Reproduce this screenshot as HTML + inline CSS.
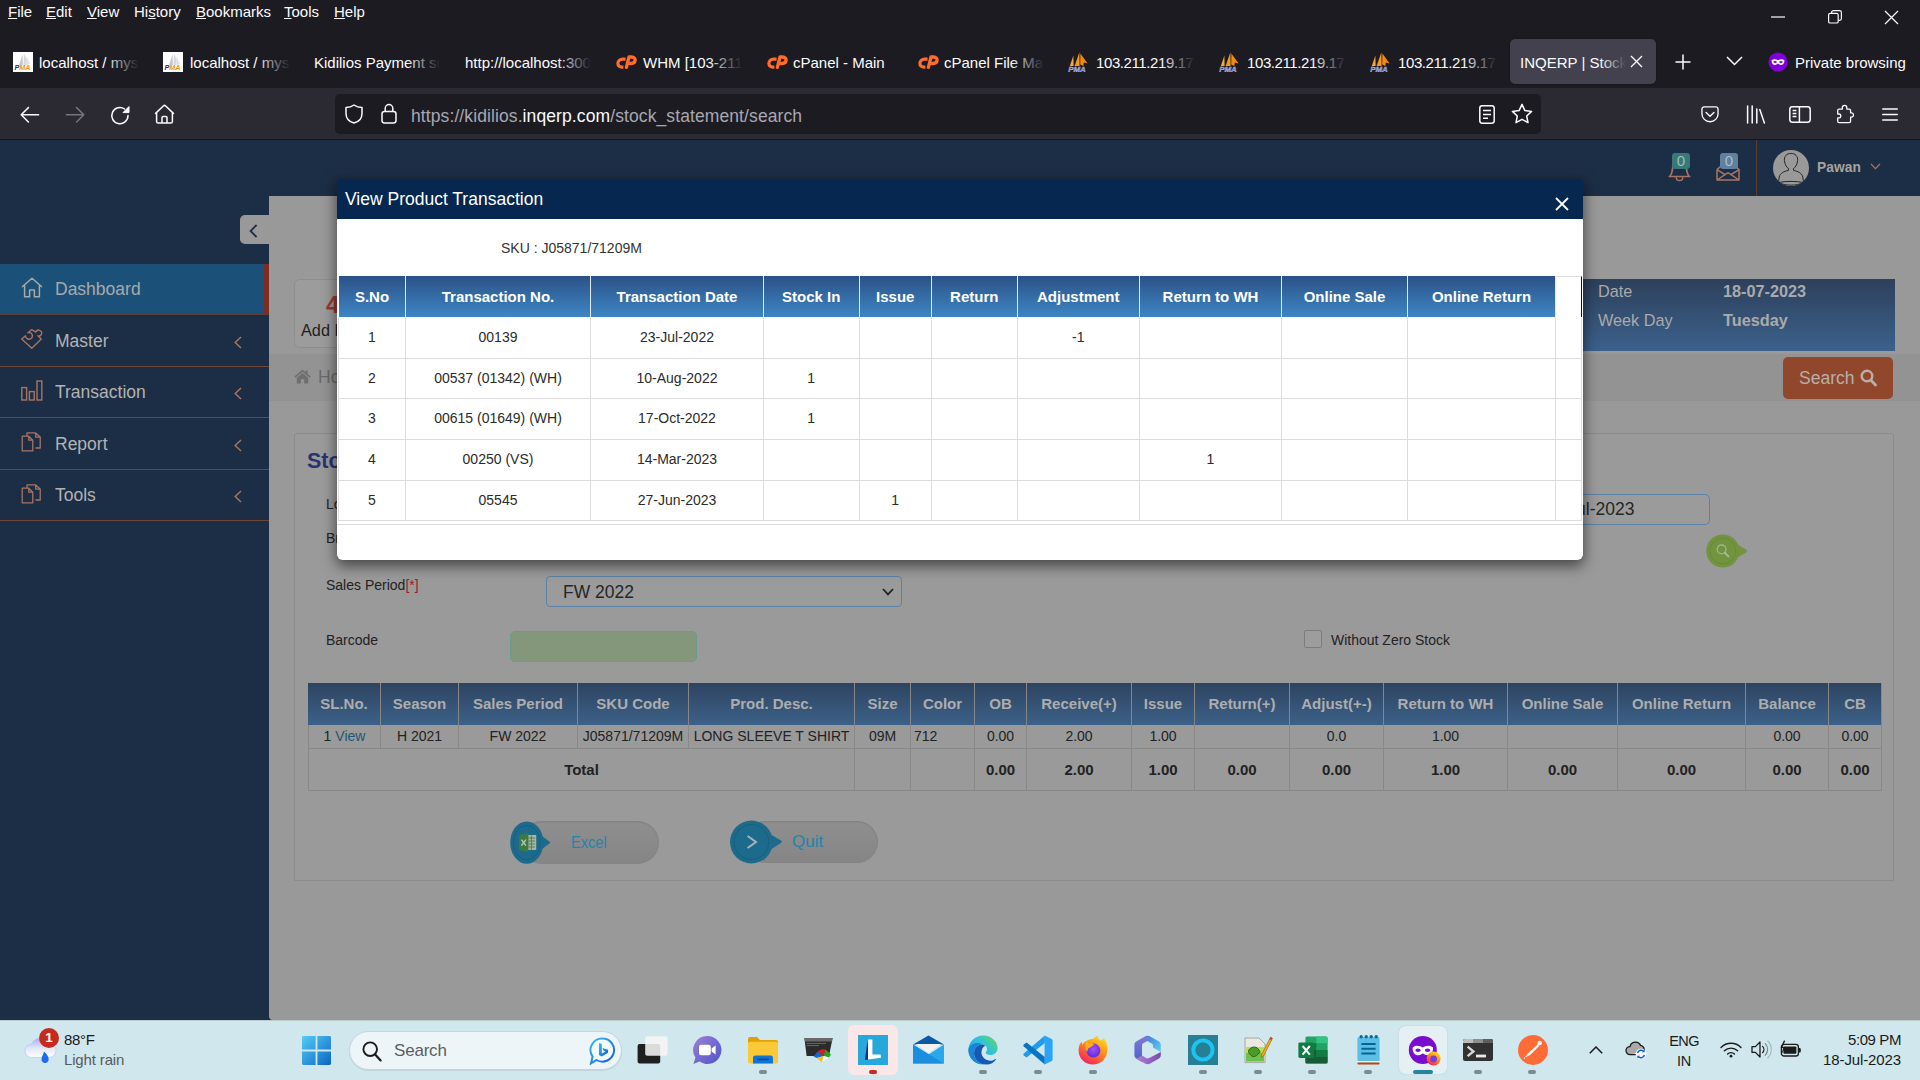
<!DOCTYPE html>
<html lang="en">
<head>
<meta charset="utf-8">
<title>INQERP | Stock statement</title>
<style>
*{box-sizing:border-box;margin:0;padding:0}
html,body{width:1920px;height:1080px;overflow:hidden;background:#1c1b22;font-family:"Liberation Sans",sans-serif}
.abs{position:absolute}
#root{position:relative;width:1920px;height:1080px;overflow:hidden}
/* ---------- browser chrome ---------- */
#chrome{position:absolute;left:0;top:0;width:1920px;height:140px;background:#1c1b22;color:#fbfbfe}
#menubar span{position:absolute;top:2px;font-size:15px;line-height:20px;color:#fbfbfe;white-space:nowrap}
#menubar u{text-decoration:underline;text-underline-offset:1px}
.tab{position:absolute;top:53px;height:20px;font-size:15px;line-height:20px;color:#fbfbfe;white-space:nowrap;overflow:hidden}
.tab .fade{position:absolute;right:0;top:0;width:34px;height:20px;background:linear-gradient(90deg,rgba(28,27,34,0),#1c1b22)}
#navbar{position:absolute;left:0;top:88px;width:1920px;height:52px;background:#2b2a33;border-bottom:1px solid #15141a}
#urlbar{position:absolute;left:335px;top:6px;width:1206px;height:40px;border-radius:5px;background:#1c1b22}
#urltext{position:absolute;left:76px;top:11px;font-size:17.5px;line-height:22px;color:#a8a8b0;white-space:nowrap;letter-spacing:.1px}
#urltext b{font-weight:normal;color:#fbfbfe}
svg{display:block}
.ico{position:absolute}
/* ---------- page ---------- */
#page{position:absolute;left:0;top:140px;width:1920px;height:880px;background:#1c2e45;overflow:hidden}

/* page pieces (coordinates relative to #page top=140) */
#content{position:absolute;left:269px;top:56px;width:1651px;height:824px;background:#999;border-bottom-left-radius:4px}
.side-row{position:absolute;left:0;width:269px;height:51px;border-bottom:1px solid #6e4636}
.side-row .txt{position:absolute;left:55px;top:14px;font-size:17.5px;line-height:22px;color:#b3b3b3;white-space:nowrap}
.side-row svg{position:absolute}
#toggle{position:absolute;left:240px;top:75px;width:29px;height:29px;background:#999;border-radius:5px 0 0 5px}
.lbl{position:absolute;font-size:14px;line-height:18px;color:#222;white-space:nowrap}

#crumb{position:absolute;left:269px;top:214px;width:1651px;height:47px;background:#939393}
#datep{position:absolute;left:1380px;top:139px;width:515px;height:72px;background:linear-gradient(#2d405b,#3c618c)}
#datep div{position:absolute;font-size:16.25px;line-height:20px;color:#aaa;white-space:nowrap}
#searchbtn{position:absolute;left:1783px;top:217px;width:110px;height:42px;border-radius:5px;background:#91472c;color:#b9aea8;font-size:17.5px;line-height:42px;padding-left:16px}
#panel{position:absolute;left:294px;top:293px;width:1600px;height:448px;border:1px solid #8b8b8b;border-radius:3px 3px 0 0;background:#9a9a9a}
#gt{position:absolute;left:308px;top:543px;border-collapse:separate;border-spacing:0;table-layout:fixed;width:1574px;font-size:14px;color:#222}
#gt th{height:42px;background:linear-gradient(#2e4460,#3c6189);color:#adadad;font-size:15px;font-weight:bold;text-align:center;border-right:1px solid #868686;padding:0 0 2px 0}
#gt td{text-align:center;border-right:1px solid #888;border-bottom:1px solid #888;padding:0;white-space:nowrap;overflow:hidden}
#gt td:first-child{border-left:1px solid #888}
#gt tr.r1 td{height:23.5px;line-height:22px}
#gt tr.r2 td{height:42.5px;font-weight:bold;font-size:15px}
#gt a{color:#1f5677;text-decoration:none}
.pill{position:absolute;height:43px;border-radius:22px;background:linear-gradient(#8f8f8f,#858585);box-shadow:inset 0 1px 2px rgba(0,0,0,.12)}
.pilltxt{position:absolute;font-size:17px;line-height:22px;color:#2585a9;white-space:nowrap}

/* ---------- modal ---------- */
#modal{position:absolute;left:337px;top:179px;width:1246px;height:381px;background:linear-gradient(#06274f 0,#06274f 40px,#fff 40px);border-radius:2px 2px 6px 6px;box-shadow:0 5px 14px 1px rgba(0,0,0,.55)}
#mhead{position:absolute;left:0;top:0;width:1246px;height:40px}
#mtitle{position:absolute;left:8px;top:9px;font-size:17.5px;line-height:22px;color:#fff;white-space:nowrap}
#mt{position:absolute;left:1px;top:97px;border-collapse:separate;border-spacing:0;table-layout:fixed;width:1244px;font-size:14px;color:#2b2b2b}
#mt th{height:41px;background:linear-gradient(#2a5287,#3f86c4);color:#fff;font-size:15px;font-weight:bold;text-align:center;border-right:1px solid #e4e9f0;padding:0;white-space:nowrap}
#mt th.last{background:#fff;border-top:1px solid #ddd;border-right:1.5px solid #111}
#mt td{text-align:center;border-right:1px solid #ddd;border-bottom:1px solid #ddd;padding:0 0 1.5px 0;white-space:nowrap}
#mt td:first-child{border-left:1px solid #ddd}
#mt th:first-child{border-left:1px solid #fff}

/* ---------- taskbar ---------- */
#taskbar .t{position:absolute;white-space:nowrap;color:#1b1b1b;font-size:15px;line-height:18px}
#taskbar .ind{position:absolute;top:50px;width:8px;height:4px;border-radius:2px;background:#7d8a90}

#taskbar{position:absolute;left:0;top:1020px;width:1920px;height:60px;background:#cfe7ed;box-shadow:inset 0 1px 0 #b9cbd1}
</style>
</head>
<body>
<div id="root">

<!-- ======================= BROWSER CHROME ======================= -->
<div id="chrome">
  <div id="menubar">
    <span style="left:8px"><u>F</u>ile</span>
    <span style="left:46px"><u>E</u>dit</span>
    <span style="left:87px"><u>V</u>iew</span>
    <span style="left:134px">Hi<u>s</u>tory</span>
    <span style="left:196px"><u>B</u>ookmarks</span>
    <span style="left:284px"><u>T</u>ools</span>
    <span style="left:334px"><u>H</u>elp</span>
  </div>
  <div id="tabs">
<svg class="ico" style="left:13px;top:52px" width="20" height="20" viewBox="0 0 20 20"><rect width="20" height="20" fill="#fdfdfd"/><path d="M6 13 L9.5 2.5 L10 13Z" fill="#c9c9cf"/><path d="M10.6 13 L11 1.5 L15.5 12.5Z" fill="#d6d6dc"/><path d="M12.5 12.5 L13.5 4 L17 12Z" fill="#e2e2e6"/><text x="1.5" y="17.6" font-family="Liberation Sans,sans-serif" font-size="7.2" font-weight="bold" font-style="italic" fill="#2b2f6e">P</text><text x="6.2" y="17.6" font-family="Liberation Sans,sans-serif" font-size="7.2" font-weight="bold" font-style="italic" fill="#e8960c">MA</text></svg><div class="tab" style="left:39px;width:100px">localhost / mysql<i class="fade"></i></div>
<svg class="ico" style="left:163px;top:52px" width="20" height="20" viewBox="0 0 20 20"><rect width="20" height="20" fill="#fdfdfd"/><path d="M6 13 L9.5 2.5 L10 13Z" fill="#c9c9cf"/><path d="M10.6 13 L11 1.5 L15.5 12.5Z" fill="#d6d6dc"/><path d="M12.5 12.5 L13.5 4 L17 12Z" fill="#e2e2e6"/><text x="1.5" y="17.6" font-family="Liberation Sans,sans-serif" font-size="7.2" font-weight="bold" font-style="italic" fill="#2b2f6e">P</text><text x="6.2" y="17.6" font-family="Liberation Sans,sans-serif" font-size="7.2" font-weight="bold" font-style="italic" fill="#e8960c">MA</text></svg><div class="tab" style="left:190px;width:100px">localhost / mysql<i class="fade"></i></div>
<div class="tab" style="left:314px;width:126px">Kidilios Payment summary<i class="fade"></i></div>
<div class="tab" style="left:465px;width:126px">http://localhost:3000<i class="fade"></i></div>
<svg class="ico" style="left:616px;top:55px" width="21" height="14" viewBox="0 0 21 14"><path d="M9.6 4.1 H6.8 C3.8 4.1 1.9 6.2 1.9 8.4 C1.9 10.6 3.6 12.1 5.8 12.1 H7.4" fill="none" stroke="#ff6c2c" stroke-width="3.2" stroke-linecap="butt"/><path d="M10.4 12.3 L13 2 H15.6 C18.2 2 19.3 3.6 19.1 5.3 C18.9 7.3 17.3 8.5 15.3 8.5 H13.4" fill="none" stroke="#ff6c2c" stroke-width="3.3" stroke-linecap="round" stroke-linejoin="round"/></svg><div class="tab" style="left:643px;width:99px">WHM [103-211-219<i class="fade"></i></div>
<svg class="ico" style="left:767px;top:55px" width="21" height="14" viewBox="0 0 21 14"><path d="M9.6 4.1 H6.8 C3.8 4.1 1.9 6.2 1.9 8.4 C1.9 10.6 3.6 12.1 5.8 12.1 H7.4" fill="none" stroke="#ff6c2c" stroke-width="3.2" stroke-linecap="butt"/><path d="M10.4 12.3 L13 2 H15.6 C18.2 2 19.3 3.6 19.1 5.3 C18.9 7.3 17.3 8.5 15.3 8.5 H13.4" fill="none" stroke="#ff6c2c" stroke-width="3.3" stroke-linecap="round" stroke-linejoin="round"/></svg><div class="tab" style="left:793px;width:110px">cPanel - Main</div>
<svg class="ico" style="left:918px;top:55px" width="21" height="14" viewBox="0 0 21 14"><path d="M9.6 4.1 H6.8 C3.8 4.1 1.9 6.2 1.9 8.4 C1.9 10.6 3.6 12.1 5.8 12.1 H7.4" fill="none" stroke="#ff6c2c" stroke-width="3.2" stroke-linecap="butt"/><path d="M10.4 12.3 L13 2 H15.6 C18.2 2 19.3 3.6 19.1 5.3 C18.9 7.3 17.3 8.5 15.3 8.5 H13.4" fill="none" stroke="#ff6c2c" stroke-width="3.3" stroke-linecap="round" stroke-linejoin="round"/></svg><div class="tab" style="left:944px;width:100px">cPanel File Manager<i class="fade"></i></div>
<svg class="ico" style="left:1068px;top:52px" width="20" height="20" viewBox="0 0 20 20"><path d="M1.8 14 L5.4 3.6 L5.6 14Z" fill="#f7a93b"/><path d="M6.6 14 L11.4 0.3 L11.6 14Z" fill="#f39a1e"/><path d="M12.2 12.6 L12.4 1.6 L19.6 11.4 L15.8 10.6 L15.4 14Z" fill="#f08a12"/><text x="0.2" y="19.6" font-family="Liberation Sans,sans-serif" font-size="7.9" font-weight="bold" font-style="italic" fill="#6d73b8" stroke="#c9cbe8" stroke-width=".35">PMA</text></svg><div class="tab" style="left:1096px;width:99px;letter-spacing:-.4px">103.211.219.177<i class="fade"></i></div>
<svg class="ico" style="left:1219px;top:52px" width="20" height="20" viewBox="0 0 20 20"><path d="M1.8 14 L5.4 3.6 L5.6 14Z" fill="#f7a93b"/><path d="M6.6 14 L11.4 0.3 L11.6 14Z" fill="#f39a1e"/><path d="M12.2 12.6 L12.4 1.6 L19.6 11.4 L15.8 10.6 L15.4 14Z" fill="#f08a12"/><text x="0.2" y="19.6" font-family="Liberation Sans,sans-serif" font-size="7.9" font-weight="bold" font-style="italic" fill="#6d73b8" stroke="#c9cbe8" stroke-width=".35">PMA</text></svg><div class="tab" style="left:1247px;width:99px;letter-spacing:-.4px">103.211.219.177<i class="fade"></i></div>
<svg class="ico" style="left:1370px;top:52px" width="20" height="20" viewBox="0 0 20 20"><path d="M1.8 14 L5.4 3.6 L5.6 14Z" fill="#f7a93b"/><path d="M6.6 14 L11.4 0.3 L11.6 14Z" fill="#f39a1e"/><path d="M12.2 12.6 L12.4 1.6 L19.6 11.4 L15.8 10.6 L15.4 14Z" fill="#f08a12"/><text x="0.2" y="19.6" font-family="Liberation Sans,sans-serif" font-size="7.9" font-weight="bold" font-style="italic" fill="#6d73b8" stroke="#c9cbe8" stroke-width=".35">PMA</text></svg><div class="tab" style="left:1398px;width:99px;letter-spacing:-.4px">103.211.219.177<i class="fade"></i></div>
<div class="abs" style="left:1510px;top:39px;width:146px;height:45px;border-radius:5px;background:#42414d;box-shadow:0 0 2px rgba(0,0,0,.5)"></div>
<div class="tab" style="left:1520px;width:106px;color:#fbfbfe">INQERP | Stock st<i class="fade" style="background:linear-gradient(90deg,rgba(66,65,77,0),#42414d);width:26px"></i></div>
<svg class="ico" style="left:1629px;top:54px" width="15" height="15" viewBox="0 0 15 15"><path d="M2 2 L13 13 M13 2 L2 13" stroke="#fbfbfe" stroke-width="1.4" fill="none"/></svg>
<svg class="ico" style="left:1675px;top:54px" width="16" height="16" viewBox="0 0 16 16"><path d="M8 0.5 V15.5 M0.5 8 H15.5" stroke="#fbfbfe" stroke-width="1.5" fill="none"/></svg>
<svg class="ico" style="left:1726px;top:56px" width="17" height="10" viewBox="0 0 17 10"><path d="M1 1 L8.5 8.5 L16 1" stroke="#fbfbfe" stroke-width="1.5" fill="none"/></svg>
<svg class="ico" style="left:1768px;top:52px" width="20" height="20" viewBox="0 0 20 20"><circle cx="10" cy="10" r="9.6" fill="#8000d7"/><path d="M3.6 8.2 C5.4 6.6 8.2 7 10 8.3 C11.8 7 14.6 6.6 16.4 8.2 C16.6 11.2 14.8 13 12.9 13 C11.4 13 10.8 11.8 10 11.8 C9.2 11.8 8.6 13 7.1 13 C5.2 13 3.4 11.2 3.6 8.2Z" fill="#fff"/><ellipse cx="7.1" cy="10" rx="1.7" ry="1.1" fill="#8000d7"/><ellipse cx="12.9" cy="10" rx="1.7" ry="1.1" fill="#8000d7"/></svg>
<div class="tab" style="left:1795px;width:120px">Private browsing</div>
<svg class="ico" style="left:1771px;top:16px" width="14" height="2" viewBox="0 0 14 2"><path d="M0 1 H14" stroke="#fbfbfe" stroke-width="1.2"/></svg>
<svg class="ico" style="left:1828px;top:10px" width="14" height="14" viewBox="0 0 14 14"><rect x="0.6" y="3.4" width="9.6" height="9.6" rx="1.6" fill="none" stroke="#fbfbfe" stroke-width="1.2"/><path d="M3.6 3.2 V2.4 A1.8 1.8 0 0 1 5.4 0.6 H11.6 A1.8 1.8 0 0 1 13.4 2.4 V8.6 A1.8 1.8 0 0 1 11.6 10.4 H10.6" fill="none" stroke="#fbfbfe" stroke-width="1.2"/></svg>
<svg class="ico" style="left:1884px;top:10px" width="15" height="15" viewBox="0 0 15 15"><path d="M1 1 L14 14 M14 1 L1 14" stroke="#fbfbfe" stroke-width="1.2" fill="none"/></svg>
</div>
  <div id="navbar">

    <svg class="ico" style="left:20px;top:17px" width="20" height="20" viewBox="0 0 20 20"><path d="M18.6 9.8 H1.4 M8.4 2.6 L1.2 9.8 L8.4 17" fill="none" stroke="#fbfbfe" stroke-width="1.5" stroke-linecap="round" stroke-linejoin="round"/></svg>
    <svg class="ico" style="left:65px;top:17px" width="20" height="20" viewBox="0 0 20 20"><path d="M1.4 9.8 H18.6 M11.6 2.6 L18.8 9.8 L11.6 17" fill="none" stroke="#75747d" stroke-width="1.5" stroke-linecap="round" stroke-linejoin="round"/></svg>
    <svg class="ico" style="left:110px;top:17px" width="20" height="21" viewBox="0 0 20 21"><path d="M18 10.6 A8.1 8.1 0 1 1 14.6 4" fill="none" stroke="#fbfbfe" stroke-width="1.5" stroke-linecap="round"/><path d="M19 1.6 V7.6 H13 Z" fill="#fbfbfe" stroke="#fbfbfe" stroke-width="1" stroke-linejoin="round"/></svg>
    <svg class="ico" style="left:154px;top:16px" width="21" height="21" viewBox="0 0 21 21"><path d="M1.6 9.4 L9.3 2 A1.7 1.7 0 0 1 11.7 2 L19.4 9.4 M2.6 8.6 V17.4 A1.6 1.6 0 0 0 4.2 19 H16.8 A1.6 1.6 0 0 0 18.4 17.4 V8.6 M8 19 V13.6 A1.2 1.2 0 0 1 9.2 12.4 H11.8 A1.2 1.2 0 0 1 13 13.6 V19" fill="none" stroke="#fbfbfe" stroke-width="1.5" stroke-linejoin="round" stroke-linecap="round"/></svg>

    <svg class="ico" style="left:1701px;top:18px" width="18" height="17" viewBox="0 0 20 19"><path d="M3.4 1 H16.6 A2.4 2.4 0 0 1 19 3.4 V8.6 A9 9 0 0 1 1 8.6 V3.4 A2.4 2.4 0 0 1 3.4 1Z" fill="none" stroke="#fbfbfe" stroke-width="1.5"/><path d="M5.6 7.2 L10 11.4 L14.4 7.2" fill="none" stroke="#fbfbfe" stroke-width="1.6" stroke-linecap="round" stroke-linejoin="round"/></svg>
    <svg class="ico" style="left:1746px;top:17px" width="20" height="19" viewBox="0 0 20 19"><path d="M1.6 1 V18 M6.2 1 V18 M10.8 4 V18 M13.8 4.6 L18.4 18" stroke="#fbfbfe" stroke-width="1.5" fill="none" stroke-linecap="round"/></svg>
    <svg class="ico" style="left:1789px;top:18px" width="22" height="17" viewBox="0 0 22 17"><rect x="0.8" y="0.8" width="20.4" height="15.4" rx="2.6" fill="none" stroke="#fbfbfe" stroke-width="1.5"/><path d="M10.4 1 V16 M3.6 4.6 H7.4 M3.6 7.6 H7.4 M3.6 10.6 H7.4" stroke="#fbfbfe" stroke-width="1.5" fill="none"/></svg>
    <svg class="ico" style="left:1836px;top:16px" width="18" height="20" viewBox="0 0 21 22"><path d="M7.4 5.2 V3.6 A2.6 2.6 0 0 1 12.6 3.6 V5.2 H15.4 A1.6 1.6 0 0 1 17 6.8 V9.8 H18 A2.4 2.4 0 0 1 18 14.6 H17 V19.4 A1.6 1.6 0 0 1 15.4 21 H3.6 A1.6 1.6 0 0 1 2 19.4 V15.4 H3.4 A2.2 2.2 0 0 0 3.4 11 H2 V6.8 A1.6 1.6 0 0 1 3.6 5.2Z" fill="none" stroke="#fbfbfe" stroke-width="1.5" stroke-linejoin="round"/></svg>
    <svg class="ico" style="left:1882px;top:20px" width="16" height="13" viewBox="0 0 16 13"><path d="M0.7 1 H15.3 M0.7 6.5 H15.3 M0.7 12 H15.3" stroke="#fbfbfe" stroke-width="1.5" fill="none" stroke-linecap="round"/></svg>
    <div id="urlbar">

      <svg class="ico" style="left:10px;top:10px" width="18" height="20" viewBox="0 0 18 20"><path d="M9 1 C6.2 3 3.6 3.4 1 3.4 V9.4 C1 14.4 4.6 17.8 9 19 C13.4 17.8 17 14.4 17 9.4 V3.4 C14.4 3.4 11.8 3 9 1Z" fill="none" stroke="#fbfbfe" stroke-width="1.5" stroke-linejoin="round"/></svg>
      <svg class="ico" style="left:46px;top:9px" width="16" height="21" viewBox="0 0 16 21"><rect x="1" y="8.6" width="14" height="11.4" rx="2.4" fill="none" stroke="#fbfbfe" stroke-width="1.5"/><path d="M4.2 8.6 V5.4 A3.8 3.8 0 0 1 11.8 5.4 V8.6" fill="none" stroke="#fbfbfe" stroke-width="1.5"/></svg>
      <svg class="ico" style="left:1144px;top:11px" width="16" height="19" viewBox="0 0 16 19"><rect x="0.8" y="0.8" width="14.4" height="17.4" rx="2.4" fill="none" stroke="#fbfbfe" stroke-width="1.5"/><path d="M4 5.6 H12 M4 9.4 H12 M4 13.2 H9" stroke="#fbfbfe" stroke-width="1.5" fill="none"/></svg>
      <svg class="ico" style="left:1176px;top:9px" width="22" height="21" viewBox="0 0 22 21"><path d="M11 1.4 L13.9 7.6 L20.6 8.4 L15.7 13 L17 19.6 L11 16.3 L5 19.6 L6.3 13 L1.4 8.4 L8.1 7.6 Z" fill="none" stroke="#fbfbfe" stroke-width="1.5" stroke-linejoin="round"/></svg>
      <div id="urltext">https://kidilios.<b>inqerp.com</b>/stock_statement/search</div>
    </div>
  </div>
</div>

<!-- ======================= PAGE ======================= -->
<div id="page">

  <div id="content"></div>

  <!-- header right -->
  <div class="abs" style="left:1756px;top:0;width:1px;height:56px;background:#5e3a2e"></div>
  <svg class="ico" style="left:1668px;top:22px" width="23" height="20" viewBox="0 0 23 20"><path d="M1.2 14.6 C4.4 12.8 4.6 8 5 1 H18 C18.4 8 18.6 12.8 21.8 14.6 Z" fill="none" stroke="#a87462" stroke-width="1.5" stroke-linejoin="round"/><path d="M8.2 15.2 A3.3 3.3 0 0 0 14.8 15.2" fill="none" stroke="#a87462" stroke-width="1.5"/></svg>
  <div class="abs" style="left:1672px;top:13px;width:18px;height:16px;border-radius:3px;background:#357a77;color:#a9b9b5;font-size:15px;line-height:16px;text-align:center">0</div>
  <svg class="ico" style="left:1716px;top:22px" width="24" height="19" viewBox="0 0 24 19"><path d="M1 7.6 L5 4 M23 7.6 L19 4 M1 7.6 V18 H23 V7.6 L14.4 13 M1 7.6 L9.6 13 M1 18 L10.4 11.6 C11.4 10.9 12.6 10.9 13.6 11.6 L23 18" fill="none" stroke="#a87462" stroke-width="1.5" stroke-linejoin="round"/></svg>
  <div class="abs" style="left:1720px;top:13px;width:18px;height:16px;border-radius:3px;background:#5f809e;color:#aebccb;font-size:15px;line-height:16px;text-align:center">0</div>
  <svg class="ico" style="left:1773px;top:10px" width="36" height="36" viewBox="0 0 36 36"><defs><clipPath id="avc"><circle cx="18" cy="18" r="18"/></clipPath></defs><circle cx="18" cy="18" r="18" fill="#999"/><g clip-path="url(#avc)" fill="none" stroke="#262626" stroke-width="1"><path d="M18 3.4 C22.4 3.4 25 6.4 24.6 10.6 C24.2 14.6 22.2 17.6 20.4 18.6 L20.6 20.4 C25 21.4 28.6 22.8 29.8 27 L30.6 32.6 C24 36 12 36 5.4 32.6 L6.2 27 C7.4 22.8 11 21.4 15.4 20.4 L15.6 18.6 C13.8 17.6 11.8 14.6 11.4 10.6 C11 6.4 13.6 3.4 18 3.4Z"/><path d="M5.4 32.6 C12 31 24 31 30.6 32.6"/></g></svg>
  <div class="abs" style="left:1817px;top:19px;font-size:13.75px;line-height:18px;font-weight:bold;color:#a9a39d;letter-spacing:.1px">Pawan</div>
  <svg class="ico" style="left:1870px;top:23px" width="11" height="7" viewBox="0 0 11 7"><path d="M1 1 L5.5 5.6 L10 1" fill="none" stroke="#a87462" stroke-width="1.3"/></svg>

  <!-- add box -->
  <div class="abs" style="left:294px;top:139px;width:90px;height:69px;border:1px solid #8e8e8e;border-radius:6px;background:#9c9c9c"></div>
  <div class="abs" style="left:326px;top:153px;font-size:24px;line-height:24px;font-weight:bold;color:#9a3a2a">4</div>
  <div class="lbl" style="left:301px;top:180px;font-size:16.25px;line-height:20px;color:#1f1f1f">Add Fabric</div>

  <!-- date panel -->
  <div id="datep"><div style="left:218px;top:2px">Date</div><div style="left:343px;top:2px;font-weight:bold">18-07-2023</div><div style="left:218px;top:31px">Week Day</div><div style="left:343px;top:31px;font-weight:bold">Tuesday</div></div>

  <!-- breadcrumb -->
  <div id="crumb"></div>
  <svg class="ico" style="left:294px;top:229px" width="17" height="15" viewBox="0 0 17 15"><path d="M8.5 0.6 L0.4 7.6 L1.4 8.8 L8.5 2.8 L15.6 8.8 L16.6 7.6 L13.6 5 V1.4 H11.6 V3.3 Z M2.8 8.8 L8.5 4 L14.2 8.8 V14.4 H10.2 V10.2 H6.8 V14.4 H2.8Z" fill="#6f6f6f"/></svg>
  <div class="abs" style="left:318px;top:226px;font-size:17.5px;line-height:22px;color:#6a6a6a">Home</div>
  <div id="searchbtn">Search<svg class="ico" style="left:77px;top:12px" width="17" height="18" viewBox="0 0 18 19"><circle cx="7.4" cy="7.4" r="5.6" fill="none" stroke="#b9aea8" stroke-width="2.6"/><path d="M11.6 11.8 L16.4 17" stroke="#b9aea8" stroke-width="3" stroke-linecap="round"/></svg></div>

  <!-- main panel -->
  <div id="panel"></div>
  <div class="abs" style="left:307px;top:308px;font-size:21.5px;line-height:26px;font-weight:bold;color:#2a3272">Stock Statement</div>
  <div class="lbl" style="left:326px;top:355px">Location</div>
  <div class="lbl" style="left:326px;top:389px">Brand</div>
  <div class="abs" style="left:1500px;top:354px;width:210px;height:31px;border:1px solid #5b83a8;border-radius:5px;background:#9b9b9b;font-size:17.5px;line-height:29px;color:#262626;padding-left:41px">18-Jul-2023</div>
  <svg class="ico" style="left:1704px;top:392px" width="46" height="38" viewBox="0 0 46 38"><path d="M31 11 L42 17.6 C43.2 18.4 43.2 19.8 42 20.6 L31 27 Z" fill="#72943e"/><circle cx="18.8" cy="19" r="16.6" fill="#72943e"/><circle cx="18.8" cy="19" r="13" fill="none" stroke="#688838" stroke-width="1"/><circle cx="17.6" cy="17.4" r="4.4" fill="none" stroke="#a3b294" stroke-width="1.3"/><path d="M20.8 20.8 L24.4 24.4" stroke="#a9b79a" stroke-width="2" stroke-linecap="round"/></svg>

  <div class="lbl" style="left:326px;top:436px">Sales Period<span style="color:#a01c2c">[*]</span></div>
  <div class="abs" style="left:546px;top:436px;width:356px;height:31px;border:1px solid #5b83a8;border-radius:4px;background:#9b9b9b;font-size:17.5px;line-height:30px;color:#262626;padding-left:16px">FW 2022<svg class="ico" style="left:335px;top:11px" width="12" height="8" viewBox="0 0 12 8"><path d="M1 1 L6 6.4 L11 1" fill="none" stroke="#222" stroke-width="1.8"/></svg></div>
  <div class="lbl" style="left:326px;top:491px">Barcode</div>
  <div class="abs" style="left:510px;top:491px;width:187px;height:31px;border:1px solid #6b9a8e;border-radius:5px;background:#84977b"></div>
  <div class="abs" style="left:1304px;top:490px;width:18px;height:18px;border:1px solid #7d7d7d;border-radius:2px;background:#9d9d9d"></div>
  <div class="lbl" style="left:1331px;top:491px">Without Zero Stock</div>

  <table id="gt"><colgroup><col style="width:73px"><col style="width:78px"><col style="width:119px"><col style="width:111px"><col style="width:166px"><col style="width:56px"><col style="width:64px"><col style="width:52px"><col style="width:105px"><col style="width:63px"><col style="width:95px"><col style="width:94px"><col style="width:124px"><col style="width:110px"><col style="width:128px"><col style="width:83px"><col style="width:53px"></colgroup><tr><th>SL.No.</th><th>Season</th><th>Sales Period</th><th>SKU Code</th><th>Prod. Desc.</th><th>Size</th><th>Color</th><th>OB</th><th>Receive(+)</th><th>Issue</th><th>Return(+)</th><th>Adjust(+-)</th><th>Return to WH</th><th>Online Sale</th><th>Online Return</th><th>Balance</th><th>CB</th></tr><tr class="r1"><td>1 <a>View</a></td><td>H 2021</td><td>FW 2022</td><td>J05871/71209M</td><td>LONG SLEEVE T SHIRT</td><td>09M</td><td><div style="text-align:left;padding-left:3px">712</div></td><td>0.00</td><td>2.00</td><td>1.00</td><td></td><td>0.0</td><td>1.00</td><td></td><td></td><td>0.00</td><td>0.00</td></tr><tr class="r2"><td colspan="5">Total</td><td></td><td></td><td>0.00</td><td>2.00</td><td>1.00</td><td>0.00</td><td>0.00</td><td>1.00</td><td>0.00</td><td>0.00</td><td>0.00</td><td>0.00</td></tr></table>

  <!-- buttons -->
  <div class="pill" style="left:520px;top:681px;width:139px"></div>
  <svg class="ico" style="left:508px;top:680px" width="44" height="45" viewBox="0 0 44 45"><path d="M32 14.6 L41.4 21.4 C42.2 22 42.2 23 41.4 23.6 L32 30.4 Z" fill="#1c6b8c"/><ellipse cx="18.8" cy="22.6" rx="16.6" ry="21.2" fill="#1c6b8c"/><ellipse cx="18.8" cy="22.6" rx="13.4" ry="17.2" fill="none" stroke="#185f7d" stroke-width="1"/><rect x="18.6" y="15" width="9.6" height="15" fill="#a9b5a4"/><path d="M20.4 18 H27 M20.4 21 H27 M20.4 24 H27 M20.4 27 H27 M23.4 15.4 V30" stroke="#4b7a4d" stroke-width=".9"/><path d="M11 15 L20.4 13 V32 L11 30 Z" fill="#3d7a3f"/><path d="M13.4 19.6 L18 25.6 M18 19.6 L13.4 25.6" stroke="#b9c4b6" stroke-width="1.5"/></svg>
  <div class="pilltxt" style="left:571px;top:692px;transform:scaleX(.86);transform-origin:0 0">Excel</div>
  <div class="pill" style="left:745px;top:681px;width:133px;height:42px"></div>
  <svg class="ico" style="left:729px;top:679px" width="54" height="46" viewBox="0 0 54 46"><path d="M40 14.4 L52 21.6 C53 22.3 53 23.3 52 24 L40 31.4 Z" fill="#1c6b8c"/><circle cx="22.4" cy="23" r="21.4" fill="#1c6b8c"/><circle cx="22.4" cy="23" r="17.4" fill="none" stroke="#185f7d" stroke-width="1"/><path d="M18.6 17 L27 23 L18.6 29" fill="none" stroke="#a9b4b9" stroke-width="2"/></svg>
  <div class="pilltxt" style="left:792px;top:691px">Quit</div>
  <!-- sidebar -->
  <div class="side-row" style="top:124px;background:#1b5178;border-bottom-color:#5f3c31"><svg style="left:21px;top:13px" width="22" height="21" viewBox="0 0 22 21"><path d="M1 10 L11 1.2 L21 10 M3.6 8.4 V19.8 H8.6 V13 H13.4 V19.8 H18.4 V8.4" fill="none" stroke="#a9a9a9" stroke-width="1.5" stroke-linejoin="round"/></svg><div class="txt" style="color:#a9a9a9">Dashboard</div><div class="abs" style="left:264px;top:0;width:5px;height:50px;background:#802b21"></div></div>
  <div class="side-row" style="top:175px;height:52px"><svg style="left:21px;top:14px" width="22" height="21" viewBox="0 0 22 21"><path d="M0.7 10 L10.8 19.3 L20.3 10 L16.9 6.85 A2.9 2.9 0 1 0 15 3.1 L10.6 0.7 L6.85 3.7 A3.4 3.4 0 1 1 4.6 6.7 Z" fill="none" stroke="#a87462" stroke-width="1.4" stroke-linejoin="round"/></svg><div class="txt" style="top:15px">Master</div><svg style="left:234px;top:21px" width="8" height="13" viewBox="0 0 8 13"><path d="M7 1 L1.2 6.5 L7 12" fill="none" stroke="#a87462" stroke-width="1.5"/></svg></div>
  <div class="side-row" style="top:227px;height:51px"><svg style="left:21px;top:13px" width="22" height="21" viewBox="0 0 22 21"><rect x="0.8" y="7.6" width="4.8" height="12.4" fill="none" stroke="#a87462" stroke-width="1.4"/><rect x="8.4" y="11.6" width="4.8" height="8.4" fill="none" stroke="#a87462" stroke-width="1.4"/><rect x="16" y="1" width="4.8" height="19" fill="none" stroke="#a87462" stroke-width="1.4"/></svg><div class="txt">Transaction</div><svg style="left:234px;top:20px" width="8" height="13" viewBox="0 0 8 13"><path d="M7 1 L1.2 6.5 L7 12" fill="none" stroke="#a87462" stroke-width="1.5"/></svg></div>
  <div class="side-row" style="top:278px;height:52px"><svg style="left:21px;top:14px" width="21" height="20" viewBox="0 0 22 22"><path d="M0.8 4.6 H8 L12.4 9 V20.8 H0.8 Z M8 4.6 V9 H12.4" fill="none" stroke="#a87462" stroke-width="1.4" stroke-linejoin="round"/><path d="M6 4.4 V1 H15.6 L20.6 5.6 V17.6 H15.4 M15.6 1 V5.6 H20.6" fill="none" stroke="#a87462" stroke-width="1.4" stroke-linejoin="round"/></svg><div class="txt" style="top:15px">Report</div><svg style="left:234px;top:21px" width="8" height="13" viewBox="0 0 8 13"><path d="M7 1 L1.2 6.5 L7 12" fill="none" stroke="#a87462" stroke-width="1.5"/></svg></div>
  <div class="side-row" style="top:330px;height:51px"><svg style="left:21px;top:14px" width="21" height="20" viewBox="0 0 22 22"><path d="M0.8 4.6 H8 L12.4 9 V20.8 H0.8 Z M8 4.6 V9 H12.4" fill="none" stroke="#a87462" stroke-width="1.4" stroke-linejoin="round"/><path d="M6 4.4 V1 H15.6 L20.6 5.6 V17.6 H15.4 M15.6 1 V5.6 H20.6" fill="none" stroke="#a87462" stroke-width="1.4" stroke-linejoin="round"/></svg><div class="txt">Tools</div><svg style="left:234px;top:20px" width="8" height="13" viewBox="0 0 8 13"><path d="M7 1 L1.2 6.5 L7 12" fill="none" stroke="#a87462" stroke-width="1.5"/></svg></div>
  <div id="toggle"><svg class="ico" style="left:9px;top:9px" width="9" height="14" viewBox="0 0 9 14"><path d="M7.6 1 L1.6 7 L7.6 13" fill="none" stroke="#1c2e45" stroke-width="1.8"/></svg></div>
</div>


<!-- ======================= MODAL ======================= -->
<div id="modal">
  <div id="mhead"><div id="mtitle">View Product Transaction</div>
    <svg class="ico" style="left:1218px;top:18px" width="14" height="14" viewBox="0 0 14 14"><path d="M1 1 L13 13 M13 1 L1 13" stroke="#fff" stroke-width="1.8" fill="none"/></svg>
  </div>
  <div class="lbl" style="left:164px;top:60px;color:#333">SKU : J05871/71209M</div>
  <table id="mt"><colgroup><col style="width:68px"><col style="width:185px"><col style="width:173px"><col style="width:95.5px"><col style="width:72.5px"><col style="width:85.5px"><col style="width:122.5px"><col style="width:142px"><col style="width:126px"><col style="width:148px"><col style="width:26px"></colgroup><tr><th>S.No</th><th>Transaction No.</th><th>Transaction Date</th><th>Stock In</th><th>Issue</th><th>Return</th><th>Adjustment</th><th>Return to WH</th><th>Online Sale</th><th>Online Return</th><th class="last"></th></tr><tr><td style="height:42px">1</td><td>00139</td><td>23-Jul-2022</td><td></td><td></td><td></td><td>-1</td><td></td><td></td><td></td><td></td></tr><tr><td style="height:40px">2</td><td>00537 (01342) (WH)</td><td>10-Aug-2022</td><td>1</td><td></td><td></td><td></td><td></td><td></td><td></td><td></td></tr><tr><td style="height:41px">3</td><td>00615 (01649) (WH)</td><td>17-Oct-2022</td><td>1</td><td></td><td></td><td></td><td></td><td></td><td></td><td></td></tr><tr><td style="height:41px">4</td><td>00250 (VS)</td><td>14-Mar-2023</td><td></td><td></td><td></td><td></td><td>1</td><td></td><td></td><td></td></tr><tr><td style="height:40px">5</td><td>05545</td><td>27-Jun-2023</td><td></td><td>1</td><td></td><td></td><td></td><td></td><td></td><td></td></tr></table>
  <div class="abs" style="left:0;top:345px;width:1246px;height:1px;background:#dcdcdc"></div>
</div>

<!-- ======================= TASKBAR ======================= -->
<div id="taskbar">

  <!-- weather -->
  <svg class="ico" style="left:24px;top:17px" width="34" height="30" viewBox="0 0 34 30"><defs><linearGradient id="cl" x1="0" y1="0" x2="0" y2="1"><stop offset="0" stop-color="#a7b0ea"/><stop offset=".55" stop-color="#e4e8fb"/><stop offset="1" stop-color="#ffffff"/></linearGradient></defs><path d="M7.4 20.4 A6.6 6.6 0 0 1 7.6 7.2 A9.4 9.4 0 0 1 25 6.6 A6.9 6.9 0 0 1 25.4 20.4 Z" fill="url(#cl)" stroke="#c3c9f0" stroke-width=".8"/><path d="M20 14.6 C24.4 18.6 25.4 21.8 24.2 24.2 A3.6 3.6 0 0 1 17.6 21.6 C18 19.4 19.4 17.4 20 14.6Z" fill="#1a6cf0"/></svg>
  <div class="abs" style="left:39px;top:8px;width:20px;height:20px;border-radius:10px;background:#c42b1c;color:#fff;font-size:13.5px;line-height:20px;font-weight:bold;text-align:center">1</div>
  <div class="t" style="left:64px;top:11px;letter-spacing:-.3px">88°F</div>
  <div class="t" style="left:64px;top:31px;color:#575b5e;letter-spacing:-.15px">Light rain</div>
  <!-- start -->
  <svg class="ico" style="left:302px;top:16px" width="29" height="29" viewBox="0 0 29 29"><defs><linearGradient id="wl" x1="0" y1="0" x2="1" y2="1"><stop offset="0" stop-color="#55cdf7"/><stop offset="1" stop-color="#0a66c2"/></linearGradient></defs><path d="M1.4 0 H13.6 V13.6 H0 V1.4 A1.4 1.4 0 0 1 1.4 0Z M15.4 0 H27.6 A1.4 1.4 0 0 1 29 1.4 V13.6 H15.4Z M0 15.4 H13.6 V29 H1.4 A1.4 1.4 0 0 1 0 27.6Z M15.4 15.4 H29 V27.6 A1.4 1.4 0 0 1 27.6 29 H15.4Z" fill="url(#wl)"/></svg>
  <!-- search -->
  <div class="abs" style="left:349px;top:11px;width:273px;height:39px;border-radius:19.5px;background:#edf5f8;border:1px solid #c3d6dc;box-shadow:0 1px 1px rgba(0,0,0,.08)"></div>
  <svg class="ico" style="left:362px;top:21px" width="20" height="21" viewBox="0 0 20 21"><circle cx="8.2" cy="8.2" r="6.8" fill="none" stroke="#1b1b1b" stroke-width="1.9"/><path d="M13.2 13.4 L18.6 19.4" stroke="#1b1b1b" stroke-width="2.2" stroke-linecap="round"/></svg>
  <div class="t" style="left:394px;top:20px;font-size:17px;line-height:22px;color:#5a5e61;letter-spacing:-.2px">Search</div>
  <svg class="ico" style="left:589px;top:17px" width="27" height="28" viewBox="0 0 27 28"><defs><linearGradient id="bg1" x1="0" y1="0" x2="1" y2="1"><stop offset="0" stop-color="#37bdf1"/><stop offset="1" stop-color="#1456d8"/></linearGradient></defs><path d="M13.6 1.4 A11.6 11.6 0 1 1 7.6 23 L2 26.4 L3.6 19.6 A11.6 11.6 0 0 1 13.6 1.4Z" fill="#f2f9fc" stroke="url(#bg1)" stroke-width="2"/><path d="M10 6 L12.8 7 V16.6 L16.4 14.6 L14.4 13.6 L13.4 11 L19 12.8 V15.8 L12.8 19.6 L10 18Z" fill="url(#bg1)"/></svg>
  <!-- task view -->
  <svg class="ico" style="left:637px;top:16px" width="31" height="28" viewBox="0 0 31 28"><rect x="0.6" y="8" width="22.6" height="19.6" rx="2" fill="#1f1f1f"/><rect x="8.2" y="0.2" width="22.4" height="19.6" rx="2" fill="#f6f6f6" fill-opacity=".88"/></svg>
  <!-- chat -->
  <svg class="ico" style="left:692px;top:15px" width="30" height="30" viewBox="0 0 30 30"><defs><linearGradient id="ch" x1="0" y1="0" x2="1" y2="1"><stop offset="0" stop-color="#9b7fd6"/><stop offset="1" stop-color="#4f56c9"/></linearGradient></defs><path d="M15.4 1 A14 14 0 1 1 7.6 26.6 L1.4 29 L3.4 22.6 A14 14 0 0 1 15.4 1Z" fill="url(#ch)"/><rect x="7" y="9.8" width="11.8" height="10.4" rx="2.2" fill="#fff"/><path d="M19.6 13.4 L23.6 10.6 V19.4 L19.6 16.6Z" fill="#fff"/></svg>
  <!-- explorer -->
  <svg class="ico" style="left:748px;top:16px" width="30" height="28" viewBox="0 0 30 28"><path d="M0 3 A2 2 0 0 1 2 1 H9 L12 4 H28 A2 2 0 0 1 30 6 V10 H0Z" fill="#e0a100"/><rect x="0" y="5.8" width="30" height="21.6" rx="2" fill="#fbc837"/><path d="M5 27.4 V22 A2.4 2.4 0 0 1 7.4 19.6 H22.6 A2.4 2.4 0 0 1 25 22 V27.4Z" fill="#1173d4"/><rect x="9" y="22.6" width="12" height="1.6" rx=".8" fill="#0a4f9c"/></svg>
  <div class="ind" style="left:759.0px;width:8px"></div>
  <!-- colour terminal -->
  <svg class="ico" style="left:804px;top:17px" width="29" height="26" viewBox="0 0 29 26"><path d="M0.4 1 H28.6 L25 19 H2.6Z" fill="#2b2b2b"/><path d="M0.4 1 H28.6 L28 4.4 H1Z" fill="#6a6a6a"/><path d="M2.4 6.4 H22 M2.6 8.6 H15" stroke="#777" stroke-width=".8"/><path d="M13.6 14.4 L17.6 12.2 L21.4 12.6 L19.6 19Z" fill="#e01b1b"/><path d="M13.6 14.4 L19.6 19 L12.6 21 L9.6 19.4Z" fill="#1e63d0"/><path d="M21.4 12.6 L27 17.4 L25 20.4 L19.6 19Z" fill="#24a324"/><path d="M12.6 21 L19.6 19 L18 25.4 Z" fill="#f0c419"/><path d="M19.6 19 L25 20.4 L18 25.4Z" fill="#f2f2f2"/></svg>
  <!-- L app -->
  <div class="abs" style="left:848px;top:5px;width:50px;height:50px;border-radius:6px;background:#fbe7e8"></div>
  <svg class="ico" style="left:858px;top:15px" width="30" height="30" viewBox="0 0 30 30"><rect width="30" height="30" fill="#26a8da"/><path d="M9.6 5 L7 25 L10.6 24.4 Z" fill="#12307a"/><path d="M10 4.6 H14.4 V19.6 H22.6 L23 22.8 L10 24.6Z" fill="#fff"/></svg>
  <div class="ind" style="left:868.7px;width:8px;background:#c42b1c"></div>
  <!-- mail -->
  <svg class="ico" style="left:913px;top:15px" width="31" height="29" viewBox="0 0 31 29"><path d="M0 9.4 L15.5 0.4 L31 9.4 Z" fill="#0c59a4"/><path d="M3 9 H28 L15.5 18Z" fill="#f3f3f3"/><path d="M0 9.4 L15.5 19.6 L31 9.4 V28.6 H0Z" fill="#28a8ea"/><path d="M0 9.4 L31 28.6 H0Z" fill="#1a8fe0"/></svg>
  <!-- edge -->
  <svg class="ico" style="left:968px;top:15px" width="30" height="30" viewBox="0 0 30 30"><defs><linearGradient id="eg" x1="0" y1="1" x2="1" y2="0"><stop offset="0" stop-color="#1b9de2"/><stop offset=".6" stop-color="#2fc2df"/><stop offset="1" stop-color="#6bdc4a"/></linearGradient></defs><path d="M15 0.4 C23.6 0.4 29.6 6.6 29.6 13 C29.6 17.6 26 20 22.6 20 C19.6 20 17.4 18.8 17.6 17.4 C18.6 16.4 19 15.4 19 14 C19 11.4 16.6 9.4 14 9.4 C9.6 9.4 6 13.4 6 18 C6 24 11 28.6 17.6 29.4 C8 30.6 0.4 23.6 0.4 15 C0.4 7 7 0.4 15 0.4Z" fill="url(#eg)"/><path d="M6 18 C6 24.6 11.6 29.6 18.6 29.6 C22.6 29.6 26 27.6 28 24.6 C27.6 24 27 24 26.6 24.4 C24.6 25.8 21.6 26 19 25 C14.6 23.4 12.4 19 14 14.6 C14.6 12.8 15.8 11.6 17.2 10.8 C16.2 9.8 15 9.4 14 9.4 C9.6 9.4 6 13.4 6 18Z" fill="#1559b3"/><path d="M0.4 15 C0.4 22 5.6 28 12.6 29.2 C8.6 27.2 6 23 6 18 C6 13.4 9.6 9.4 14 9.4 C11 6.4 1 8 0.4 15Z" fill="#1b84d6"/></svg>
  <div class="ind" style="left:978.7px;width:8px"></div>
  <!-- vscode -->
  <svg class="ico" style="left:1023px;top:15px" width="30" height="30" viewBox="0 0 30 30"><path d="M0.8 20.4 C0.2 19.8 0.2 19 0.8 18.4 L21.8 0.6 V8 L3.6 22.6 Z" fill="#1f9cf0"/><path d="M0.8 9.6 C0.2 10.2 0.2 11 0.8 11.6 L21.8 29.4 V22 L3.6 7.4 Z" fill="#0a74c4"/><path d="M21.6 0.6 L28.6 4 C29.2 4.3 29.6 4.9 29.6 5.6 V24.4 C29.6 25.1 29.2 25.7 28.6 26 L21.6 29.4 Z" fill="#2aa4f4"/><path d="M21.8 8 L12.6 15 L21.8 22 Z" fill="#1488d8" fill-opacity=".0"/></svg>
  <div class="ind" style="left:1033.7px;width:8px"></div>
  <!-- firefox -->
  <svg class="ico" style="left:1078px;top:15px" width="30" height="30" viewBox="0 0 30 30"><defs><linearGradient id="ff" x1=".8" y1="0" x2=".2" y2="1"><stop offset="0" stop-color="#ffe226"/><stop offset=".45" stop-color="#ff8a16"/><stop offset="1" stop-color="#f5156c"/></linearGradient><radialGradient id="ffp" cx=".5" cy=".4" r=".6"><stop offset="0" stop-color="#a64dff"/><stop offset="1" stop-color="#5b2fd0"/></radialGradient></defs><path d="M15 4 C17.6 1.6 19 0.8 20 0.4 C19.6 2.4 20.6 4 22.6 5.6 C25 4.4 25.4 3.6 25.6 2.6 C28.6 6.4 29.8 10.6 29.4 15.6 C28.8 24 22.6 29.6 15 29.6 C7 29.6 0.6 23.6 0.6 15.6 C0.6 11.6 1.8 8.6 3.6 6.6 C3.6 8 4 9 4.6 9.6 C5.6 7.6 7 6.6 8.6 6 C10.6 4.4 12.6 4 15 4Z" fill="url(#ff)"/><circle cx="15.4" cy="15.6" r="7" fill="url(#ffp)"/><path d="M8.6 6 C10 8 11.4 8.6 13.6 8.6 C15 8.6 16 9.4 16 10 C15 11 13 11 12.6 12.6 C10.6 12.6 9 14.6 9.6 17 C7 14.6 6.6 9.6 8.6 6Z" fill="#ffb01f"/></svg>
  <div class="ind" style="left:1088.7px;width:8px"></div>
  <!-- m365 -->
  <svg class="ico" style="left:1134px;top:15px" width="27" height="30" viewBox="0 0 27 30"><defs><linearGradient id="m1" x1="0" y1="0" x2="1" y2="1"><stop offset="0" stop-color="#3b7be0"/><stop offset="1" stop-color="#5fd0ee"/></linearGradient><linearGradient id="m2" x1="0" y1="0" x2="0" y2="1"><stop offset="0" stop-color="#7f7ad8"/><stop offset="1" stop-color="#4a63c9"/></linearGradient><linearGradient id="m3" x1="0" y1="0" x2="1" y2="0"><stop offset="0" stop-color="#b27ce0"/><stop offset="1" stop-color="#7a4aa8"/></linearGradient></defs><path d="M11 1.4 C12.6 0.4 14.6 0.4 16.2 1.4 L24.6 6.2 C26 7 26.8 8.4 26.8 10 V17 L19 12.4 V10.6 C19 9.6 18.4 8.8 17.6 8.4 L11 4.6Z" fill="url(#m1)"/><path d="M11 1.4 L2.6 6.2 C1.2 7 0.4 8.4 0.4 10 V20 C0.4 21.6 1.2 23 2.6 23.8 L8 27 V10.6 C8 9.4 8.6 8.6 9.6 8 L16.4 4.4 C15 2.6 13 0.8 11 1.4Z" fill="url(#m2)"/><path d="M26.8 17 V20 C26.8 21.6 26 23 24.6 23.8 L16.2 28.6 C14.6 29.6 12.6 29.6 11 28.6 L2.6 23.8 L8 20.6 L12 23 C13 23.6 14.2 23.6 15.2 23 L26.8 17Z" fill="url(#m3)"/></svg>
  <!-- alexa -->
  <svg class="ico" style="left:1188px;top:15px" width="30" height="30" viewBox="0 0 30 30"><rect width="30" height="30" fill="#267f94"/><path d="M15 3.4 A11.6 11.6 0 1 1 13.4 26.5 V22.4 A7.6 7.6 0 1 0 7.4 15 C7.4 19 10 21.8 13.4 22.4 V26.5 A11.6 11.6 0 0 1 15 3.4Z" fill="#1cc5f1"/></svg>
  <div class="ind" style="left:1198.7px;width:8px"></div>
  <!-- notepad++ -->
  <svg class="ico" style="left:1244px;top:16px" width="29" height="28" viewBox="0 0 29 28"><path d="M1 2 H15 L21 8 V26.6 H1Z" fill="#e9e9e1" stroke="#9a9a92" stroke-width=".8"/><path d="M2 11 H20 V25.6 H2Z" fill="#6cc24a"/><path d="M2 11 H20 V17 H2Z" fill="#b7e05a"/><path d="M5 13.6 C8 9.6 14 10.6 14.6 14 C16.6 14.6 16.4 17.6 14 17.6 C13 21 7.6 21.6 6.6 18.6 C4.6 18 4 15.6 5 13.6Z" fill="#4a9a2c" stroke="#23510f" stroke-width=".8"/><path d="M26.6 1 L28.4 2.4 L19.6 20 L17.4 21.4 L17.6 18.8Z" fill="#f2b21b" stroke="#8a5a00" stroke-width=".6"/><path d="M26.6 1 L28.4 2.4 L27.4 4.4 L25.6 3Z" fill="#d0463a"/></svg>
  <div class="ind" style="left:1253.5px;width:8px"></div>
  <!-- excel -->
  <svg class="ico" style="left:1298px;top:16px" width="30" height="28" viewBox="0 0 30 28"><rect x="7.4" y="0.4" width="22.2" height="27.2" rx="1.6" fill="#21a366"/><path d="M18.4 0.4 H28 A1.6 1.6 0 0 1 29.6 2 V7.2 H18.4Z" fill="#33c481"/><path d="M7.4 7.2 H18.4 V14 H7.4Z" fill="#107c41"/><path d="M18.4 14 H29.6 V20.8 H18.4Z" fill="#107c41"/><path d="M7.4 14 H18.4 V20.8 H7.4Z" fill="#185c37"/><path d="M7.4 20.8 H29.6 V26 A1.6 1.6 0 0 1 28 27.6 H9 A1.6 1.6 0 0 1 7.4 26Z" fill="#185c37"/><rect x="0.4" y="6.4" width="15.6" height="15.6" rx="1.4" fill="#107c41"/><path d="M4.6 10 L11.8 18.6 M11.8 10 L4.6 18.6" stroke="#fff" stroke-width="2"/></svg>
  <div class="ind" style="left:1308.2px;width:8px"></div>
  <!-- notepad -->
  <svg class="ico" style="left:1357px;top:14px" width="23" height="31" viewBox="0 0 23 31"><rect x="0.4" y="3" width="22.2" height="24.6" rx="1.6" fill="#5cc0e6"/><rect x="0.4" y="27" width="22.2" height="1.4" fill="#f0f0f0"/><rect x="0.4" y="28.4" width="22.2" height="2.2" rx="1" fill="#b0490f"/><circle cx="4.2" cy="2.8" r="1.7" fill="#0a6a96"/><circle cx="9.2" cy="2.8" r="1.7" fill="#0a6a96"/><circle cx="14.2" cy="2.8" r="1.7" fill="#0a6a96"/><circle cx="19.2" cy="2.8" r="1.7" fill="#0a6a96"/><path d="M4.4 10 H18.6 M4.4 14.8 H18.6 M4.4 19.6 H18.6" stroke="#08658f" stroke-width="2"/></svg>
  <div class="ind" style="left:1363.6px;width:8px"></div>
  <!-- ff private -->
  <div class="abs" style="left:1399px;top:6px;width:48px;height:48px;border-radius:6px;background:#e4f0f4;box-shadow:0 0 1px rgba(0,0,0,.25)"></div>
  <svg class="ico" style="left:1408px;top:15px" width="34" height="32" viewBox="0 0 34 32"><circle cx="14.8" cy="15" r="14" fill="#7a0ccf"/><path d="M4.6 12.4 C7.6 9.8 12 10.6 14.8 12.6 C17.6 10.6 22 9.8 25 12.4 C25.4 17.4 22.4 20.2 19.4 20.2 C17 20.2 16 18.4 14.8 18.4 C13.6 18.4 12.6 20.2 10.2 20.2 C7.2 20.2 4.2 17.4 4.6 12.4Z" fill="#fff"/><ellipse cx="10" cy="15.2" rx="2.7" ry="1.7" fill="#7a0ccf"/><ellipse cx="19.6" cy="15.2" rx="2.7" ry="1.7" fill="#7a0ccf"/><circle cx="25.6" cy="23.6" r="7" fill="url(#ff)"/><circle cx="25.6" cy="24" r="3.4" fill="#7a3ce0"/></svg>
  <div class="ind" style="left:1413.0px;width:20px;background:#27849b"></div>
  <!-- terminal -->
  <svg class="ico" style="left:1463px;top:19px" width="30" height="22" viewBox="0 0 30 22"><rect width="30" height="22" rx="2" fill="#323232"/><path d="M2 0 H10 V4 H0 V2 A2 2 0 0 1 2 0Z" fill="#bdbdbd"/><rect x="10" y="0" width="10" height="4" fill="#8f8f8f"/><path d="M20 0 H28 A2 2 0 0 1 30 2 V4 H20Z" fill="#5f5f5f"/><path d="M4.6 7.6 L10.4 12.4 L4.6 17.2" fill="none" stroke="#d8d8d8" stroke-width="2.4"/><rect x="13" y="15.6" width="10" height="2.8" fill="#e8e8e8"/></svg>
  <div class="ind" style="left:1473.7px;width:8px"></div>
  <!-- postman -->
  <svg class="ico" style="left:1518px;top:15px" width="30" height="30" viewBox="0 0 30 30"><circle cx="15" cy="15" r="15" fill="#ff6c37"/><circle cx="21.6" cy="8" r="2.2" fill="#fff"/><path d="M19.6 9.6 L21.2 11 L12 20 L7 22.6 L9.4 19Z" fill="#fff"/><path d="M7 22.6 L6 23.6" stroke="#fff" stroke-width="1.2"/></svg>
  <div class="ind" style="left:1528.4px;width:8px"></div>
  <!-- tray -->
  <svg class="ico" style="left:1589px;top:26px" width="14" height="8" viewBox="0 0 14 8"><path d="M0.8 7.2 L7 1 L13.2 7.2" fill="none" stroke="#1b1b1b" stroke-width="1.5"/></svg>
  <svg class="ico" style="left:1625px;top:21px" width="23" height="19" viewBox="0 0 23 19"><path d="M5 13.6 A4 4 0 0 1 5 5.6 A5.6 5.6 0 0 1 15.6 4.4 A4.6 4.6 0 0 1 19 9.6" fill="#a9a9a9" stroke="#1b1b1b" stroke-width="1.3"/><path d="M5 13.6 H11" stroke="#1b1b1b" stroke-width="1.3"/><circle cx="16" cy="13" r="5.4" fill="#f4f8fa"/><path d="M12.6 12 A3.6 3.6 0 0 1 19 10.6 M19.4 14 A3.6 3.6 0 0 1 13 15.4" fill="none" stroke="#0f62c9" stroke-width="1.5"/><path d="M19.6 8.6 V11.2 H17 Z M12.4 17.4 V14.8 H15Z" fill="#0f62c9"/></svg>
  <div class="t" style="left:1669px;top:12px;width:30px;text-align:center;font-size:14.5px;letter-spacing:-.6px">ENG</div>
  <div class="t" style="left:1669px;top:32px;width:30px;text-align:center;font-size:14.5px;letter-spacing:-.2px">IN</div>
  <svg class="ico" style="left:1720px;top:21px" width="22" height="17" viewBox="0 0 22 17"><path d="M1 6.4 A14 14 0 0 1 21 6.4 M4.4 9.8 A9.4 9.4 0 0 1 17.6 9.8 M7.6 13 A4.8 4.8 0 0 1 14.4 13" fill="none" stroke="#1b1b1b" stroke-width="1.4" stroke-linecap="round"/><circle cx="11" cy="15.2" r="1.4" fill="#1b1b1b"/></svg>
  <svg class="ico" style="left:1751px;top:20px" width="21" height="19" viewBox="0 0 21 19"><path d="M1 6.6 H4.4 L9 2 V17 L4.4 12.4 H1Z" fill="none" stroke="#1b1b1b" stroke-width="1.3" stroke-linejoin="round"/><path d="M11.6 6.4 A4.4 4.4 0 0 1 11.6 12.6" fill="none" stroke="#1b1b1b" stroke-width="1.3" stroke-linecap="round"/><path d="M14.2 3.6 A8.4 8.4 0 0 1 14.2 15.4" fill="none" stroke="#7c878b" stroke-width="1.2" stroke-linecap="round"/><path d="M16.8 1 A12 12 0 0 1 16.8 18" fill="none" stroke="#a9b7bc" stroke-width="1.1" stroke-linecap="round"/></svg>
  <svg class="ico" style="left:1780px;top:20px" width="22" height="17" viewBox="0 0 22 17"><rect x="1.4" y="4.4" width="17" height="11.6" rx="2.6" fill="none" stroke="#1b1b1b" stroke-width="1.3"/><path d="M4 6.6 H15.4 A1 1 0 0 1 16.4 7.6 V12.8 A1 1 0 0 1 15.4 13.8 H3.6 Z" fill="#1b1b1b"/><path d="M18.6 8 H19.6 A1.2 1.2 0 0 1 20.8 9.2 V11.2 A1.2 1.2 0 0 1 19.6 12.4 H18.6Z" fill="#1b1b1b"/><path d="M4.6 0.6 L1.4 7.4 H4 L2.6 12.6" fill="none" stroke="#1b1b1b" stroke-width="1.3" stroke-linejoin="round"/></svg>
  <div class="t" style="left:1800px;top:11px;width:101px;text-align:right;letter-spacing:-.4px">5:09 PM</div>
  <div class="t" style="left:1800px;top:31px;width:101px;text-align:right;letter-spacing:-.12px">18-Jul-2023</div>
</div>

</div>
</body>
</html>
